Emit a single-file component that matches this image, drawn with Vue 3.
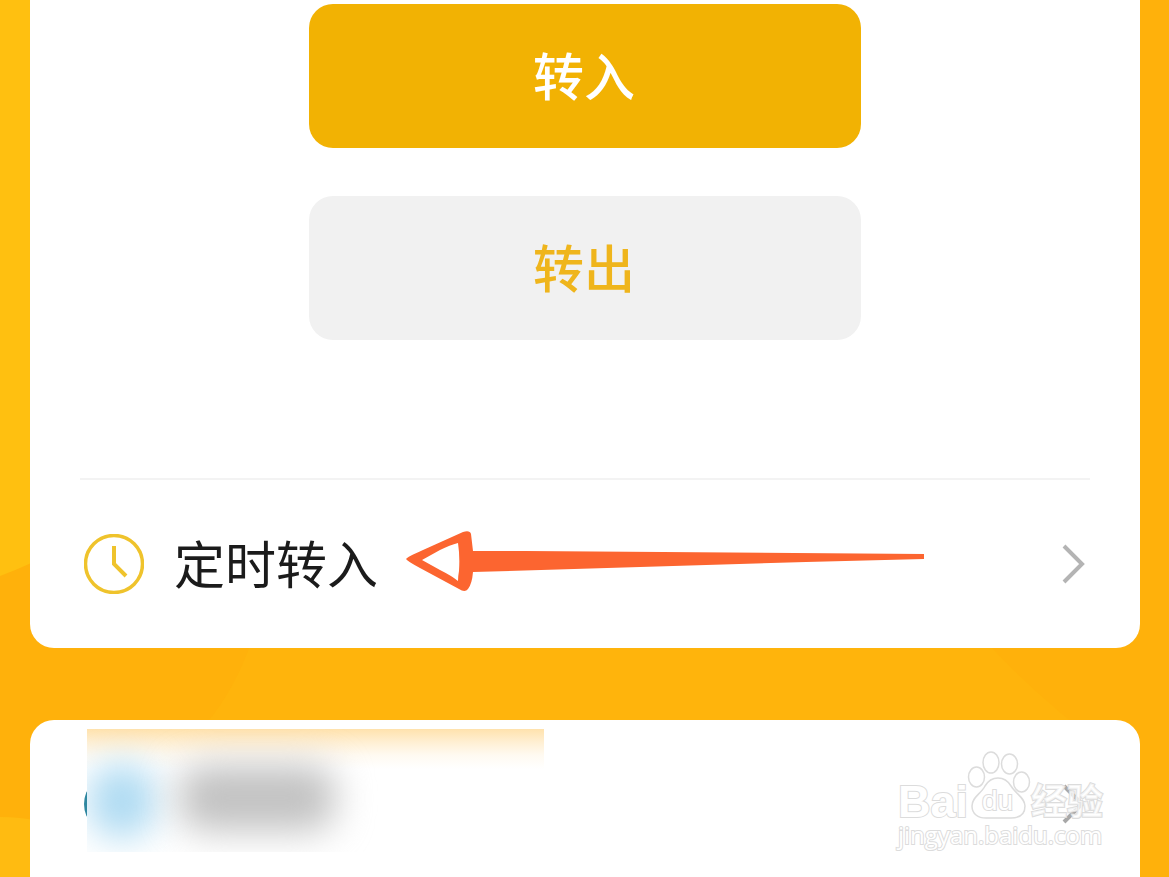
<script setup>
const actions = [
  { label: '转入', kind: 'primary' },
  { label: '转出', kind: 'secondary' },
]
</script>

<template>
  <main class="page">
    <svg class="backdrop" viewBox="0 0 1169 877" preserveAspectRatio="none" aria-hidden="true">
      <rect width="1169" height="877" fill="#ffb10b" />
      <path d="M0 0H60V548Q30 565 0 576Z" fill="#ffc010" />
      <path d="M0 817Q20 817 40 821V877H0Z" fill="#ffbb11" />
      <path d="M252 640H985Q1020 680 1075 725H205Q235 690 252 640Z" fill="#ffb40c" />
    </svg>

    <section class="card account">
      <div class="actions">
        <button v-for="a in actions" :key="a.label" type="button" class="action" :class="a.kind">{{ a.label }}</button>
      </div>
      <a href="#schedule" class="row">
        <svg class="icon" viewBox="0 0 60 60" fill="none" stroke="#efc32c" aria-hidden="true">
          <circle cx="30" cy="30" r="28.500" stroke-width="3.500" />
          <path d="M30 12V30L42 42" stroke-width="4" />
        </svg>
        <span class="label">定时转入</span>
        <svg class="pointer" viewBox="0 0 520 66" aria-hidden="true">
          <path fill="#fc6530" fill-rule="evenodd" d="M0 28Q1 26 17 19L57 1Q64 -1 65 3L67 20L120 20L518 23V28L400 31L67 41Q66 53 62 58Q59 62 53 58L14 37Q1 30 0 28ZM16 29L34 39Q46 45 52 50Q52 45 53 40Q54 25 52 12Q44 14 34 19Z" />
        </svg>
        <svg class="chevron" viewBox="0 0 24 40" fill="none" stroke="#b4b4b4" stroke-width="4" aria-hidden="true">
          <path d="M2 2L20 20L2 38" />
        </svg>
      </a>
    </section>

    <section class="card more">
      <a href="#more" class="row hidden-row" aria-label="更多">
        <svg class="icon" viewBox="0 0 60 60" aria-hidden="true">
          <circle cx="30" cy="30" r="30" fill="#2f87a0" />
        </svg>
        <svg class="chevron" viewBox="0 0 24 40" fill="none" stroke="#a8a8a8" stroke-width="4" aria-hidden="true">
          <path d="M2 2L20 20L2 38" />
        </svg>
      </a>
      <div class="mask" aria-hidden="true">
        <i class="glow"></i>
        <i class="blue"></i>
        <i class="grey"></i>
      </div>
      <svg class="watermark" viewBox="0 0 216 106" role="img" aria-label="Baidu 经验">
        <g fill="#fff" stroke="#dcdcdc" stroke-width="1.500">
          <ellipse cx="82.500" cy="29" rx="8" ry="10" />
          <ellipse cx="97" cy="14.500" rx="8" ry="10.500" />
          <ellipse cx="115.500" cy="16" rx="8" ry="10" />
          <ellipse cx="127.500" cy="34" rx="8" ry="10" />
          <path d="M104 30C98 30 94 33 91 38C87 46 78 49 78 58C78 66 84 70 92 70H117C126 70 131 66 131 58C131 50 122 46 117 38C114 33 110 30 104 30Z" />
        </g>
        <g class="outline">
          <text x="4" y="69" class="brand">Bai</text>
          <text x="88" y="62" class="du">du</text>
          <text x="137" y="67" class="cjk">经验</text>
          <text x="4" y="96" class="url">jingyan.baidu.com</text>
        </g>
      </svg>
    </section>
  </main>
</template>

<style>
body {
  margin: 0;
}
</style>

<style scoped>
.page {
  position: relative;
  box-sizing: border-box;
  min-height: 100vh;
  padding: 0 29px 0 30px;
  display: flex;
  flex-direction: column;
  gap: 72px;
  overflow: hidden;
  font-family: "Liberation Sans", "Noto Sans CJK SC", sans-serif;
}
.backdrop {
  position: absolute;
  inset: 0;
  width: 100%;
  height: 100%;
}
.card {
  position: relative;
  background: #fff;
}
.account {
  border-radius: 0 0 24px 24px;
  padding: 4px 50px 0;
}
.actions {
  display: flex;
  flex-direction: column;
  align-items: center;
  gap: 48px;
  padding-bottom: 138px;
  border-bottom: 2px solid #f3f3f3;
}
.action {
  width: 552px;
  max-width: 100%;
  height: 144px;
  border: 0;
  border-radius: 24px;
  padding: 0 2px 4px 0;
  font: 500 51px/72px "Noto Sans CJK SC", sans-serif;
  cursor: pointer;
}
.primary {
  background: #f2b203;
  color: #fff;
}
.secondary {
  background: #f1f1f1;
  color: #efb51c;
}
.row {
  display: flex;
  align-items: center;
  height: 168px;
  padding: 0 4px;
  color: #1b1b1b;
  text-decoration: none;
}
.icon {
  flex: none;
  width: 60px;
  height: 60px;
}
.label {
  flex: none;
  margin-left: 30px;
  padding-bottom: 4px;
  font: 400 51px/72px "Noto Sans CJK SC", sans-serif;
}
.pointer {
  flex: 0 1 520px;
  min-width: 0;
  height: 66px;
  margin-left: 28px;
}
.chevron {
  flex: none;
  width: 24px;
  height: 40px;
  margin-left: auto;
}
.more {
  flex: 1;
  min-height: 157px;
  border-radius: 24px 24px 0 0;
  padding: 0 50px;
  box-sizing: border-box;
}
.hidden-row {
  height: 157px;
  padding-top: 11px;
  box-sizing: border-box;
}
.mask {
  position: absolute;
  left: 57px;
  top: 9px;
  width: 457px;
  height: 123px;
  overflow: hidden;
  background: #fff;
}
.mask i {
  position: absolute;
}
.glow {
  inset: 0;
  background: linear-gradient(#ffe2ad, #fff0d5 14px, #fffaf1 26px, #fff 40px);
}
.blue {
  left: 0;
  top: 34px;
  width: 70px;
  height: 76px;
  border-radius: 50%;
  background: #addaf2;
  filter: blur(18px);
}
.grey {
  left: 92px;
  top: 36px;
  width: 156px;
  height: 66px;
  border-radius: 24px;
  background: #c2c2c2;
  filter: blur(18px);
}
.watermark {
  position: absolute;
  right: 30px;
  top: 28px;
  width: 216px;
  height: 106px;
}
.outline {
  fill: #fff;
  stroke: #dcdcdc;
  stroke-width: 2px;
  paint-order: stroke;
}
.brand {
  font: 700 45px "Liberation Sans", sans-serif;
}
.du {
  font: 400 28px "Liberation Sans", sans-serif;
}
.cjk {
  font: 700 36px "Noto Sans CJK SC", sans-serif;
  fill-opacity: 0.7;
}
.url {
  font: 400 24px "Open Sans", sans-serif;
}
</style>
